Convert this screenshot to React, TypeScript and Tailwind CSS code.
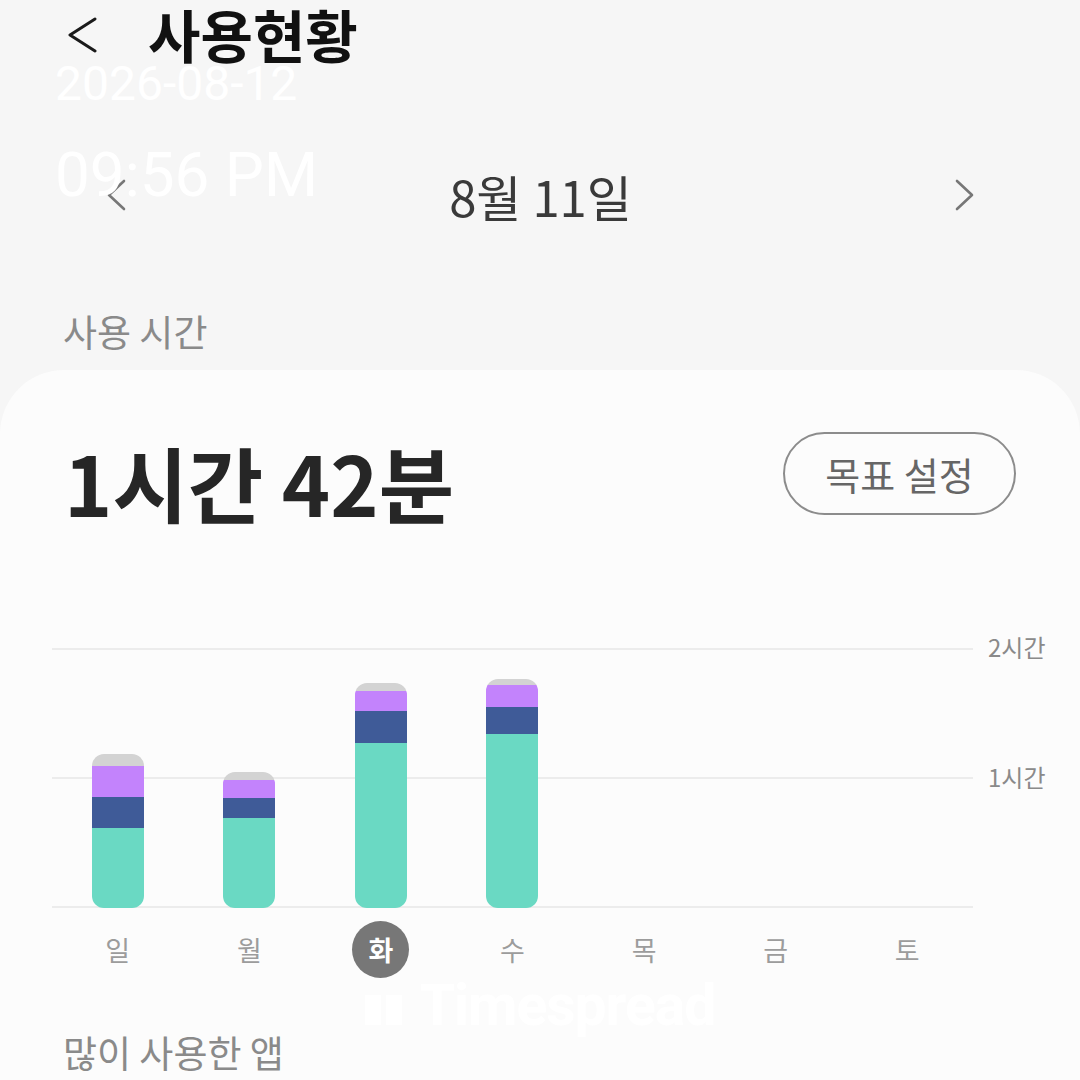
type Bar = { gray: number; purple: number; navy: number; teal: number }

const bars: (Bar | null)[] = [
  { gray: 12, purple: 31, navy: 31, teal: 80 },
  { gray: 8, purple: 18, navy: 20, teal: 90 },
  { gray: 8, purple: 20, navy: 32, teal: 165 },
  { gray: 6, purple: 22, navy: 27, teal: 174 },
  null,
  null,
  null,
]

const days = ["일", "월", "화", "수", "목", "금", "토"]

function Chevron({ dir, className }: { dir: "left" | "right"; className: string }) {
  return (
    <svg viewBox="0 0 20 32" className={className} fill="none" stroke="currentColor" strokeLinecap="round" strokeLinejoin="round">
      {dir === "left" ? <path d="M18 2 L3 16 L18 30" strokeWidth="2.6" /> : <path d="M2 2 L17 16 L2 30" strokeWidth="2.6" />}
    </svg>
  )
}

export default function App() {
  return (
    <div
      className="relative w-[1080px] h-[1080px] overflow-hidden bg-[#f6f6f6] flex flex-col"
      style={{ fontFamily: '"Noto Sans CJK KR", Roboto, sans-serif' }}
    >
      {/* header */}
      <div className="h-[70px] flex items-center pl-[67px]">
        <svg viewBox="0 0 30 36" className="w-[30px] h-[36px] text-[#1a1a1a]" fill="none" stroke="currentColor" strokeLinecap="round" strokeLinejoin="round">
          <path d="M28 2 L3 18 L28 34" strokeWidth="3" />
        </svg>
        <span className="ml-[51px] mt-[-4px] text-[57px] font-bold text-[#111] leading-none">사용현황</span>
      </div>

      {/* date row */}
      <div className="mt-[95px] h-[60px] flex items-center justify-between pl-[106px] pr-[105px]">
        <Chevron dir="left" className="w-[20px] h-[32px] text-[#777]" />
        <span className="text-[49px] text-[#3a3a3a] leading-none">8월 11일</span>
        <Chevron dir="right" className="w-[20px] h-[32px] text-[#777]" />
      </div>

      <div className="mt-[80px] h-[52px] flex items-center pl-[63px]">
        <span className="text-[37px] text-[#8a8a8a] leading-none">사용 시간</span>
      </div>

      {/* card */}
      <div className="mt-[13px] flex-1 bg-[#fcfcfc] rounded-t-[64px] pt-[62px]">
        <div className="flex justify-between items-start pl-[64px] pr-[64px]">
          <span className="mt-[9px] text-[82px] font-bold text-[#262626] leading-none">1시간 42분</span>
          <button className="w-[233px] h-[83px] rounded-full border-2 border-[#8c8c8c] text-[38px] text-[#666] leading-none">
            목표 설정
          </button>
        </div>

        {/* chart */}
        <div className="relative ml-[52px] w-[921px] h-[260px] mt-[125px]">
          <div className="absolute left-0 right-0 top-0 h-[2px] bg-[#ececec]" />
          <div className="absolute left-0 right-0 top-[129px] h-[2px] bg-[#ececec]" />
          <div className="absolute left-0 right-0 bottom-0 h-[2px] bg-[#ececec]" />
          <span className="absolute left-[936px] top-[-13px] text-[24px] text-[#8a8a8a] leading-none whitespace-nowrap">2시간</span>
          <span className="absolute left-[936px] top-[117px] text-[24px] text-[#8a8a8a] leading-none whitespace-nowrap">1시간</span>
          <div className="relative h-full grid grid-cols-7 items-end">
            {bars.map((b, i) => (
              <div key={i} className="flex justify-center">
                {b && (
                  <div className="w-[52px] flex flex-col rounded-[12px] overflow-hidden">
                    <div className="bg-[#d3d3d3]" style={{ height: b.gray }} />
                    <div className="bg-[#c383fc]" style={{ height: b.purple }} />
                    <div className="bg-[#3f5b98]" style={{ height: b.navy }} />
                    <div className="bg-[#6ad9c3]" style={{ height: b.teal }} />
                  </div>
                )}
              </div>
            ))}
          </div>
        </div>

        {/* days */}
        <div className="ml-[52px] w-[921px] mt-[13px] h-[57px] grid grid-cols-7">
          {days.map((d, i) => (
            <div key={d} className="flex justify-center items-center">
              {i === 2 ? (
                <div className="w-[57px] h-[57px] rounded-full bg-[#777] flex items-center justify-center text-[27px] font-bold text-white leading-none">
                  {d}
                </div>
              ) : (
                <span className="text-[27px] text-[#9c9c9c] leading-none">{d}</span>
              )}
            </div>
          ))}
        </div>

        {/* watermark */}
        <div className="mt-[2px] h-[50px] flex items-center justify-center gap-[18px]">
          <div className="flex gap-[5px] items-end h-[40px]">
            <div className="w-[16px] h-[30px] bg-white" />
            <div className="w-[16px] h-[30px] bg-white" />
          </div>
          <span className="text-[57px] font-bold text-white leading-none tracking-[-1px]" style={{ fontFamily: "Roboto, sans-serif" }}>
            Timespread
          </span>
        </div>

        <div className="mt-[4px] pl-[63px]">
          <span className="text-[37px] text-[#8a8a8a] leading-none">많이 사용한 앱</span>
        </div>
      </div>

      {/* timestamp overlay */}
      <div className="absolute left-[55px] top-[60px] flex flex-col text-white" style={{ fontFamily: "Roboto, sans-serif" }}>
        <span className="text-[48px] leading-none">2026-08-12</span>
        <span className="mt-[36px] text-[62px] leading-none">09:56 PM</span>
      </div>
    </div>
  )
}
